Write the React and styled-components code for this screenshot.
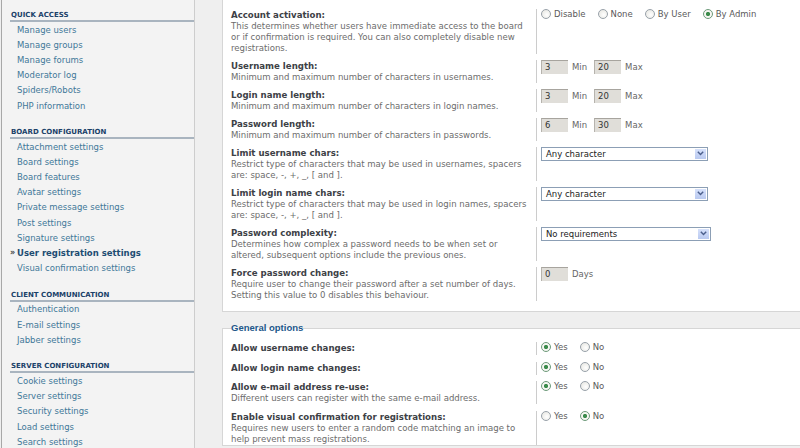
import React from 'react';
import styled, { createGlobalStyle } from 'styled-components';

const Global = createGlobalStyle`
  html, body { margin: 0; padding: 0; background: #efefef; }
  body {
    width: 800px; height: 448px; overflow: hidden;
    font-family: "DejaVu Sans", Verdana, sans-serif;
  }
`;

const Page = styled.div`
  display: grid;
  grid-template-columns: 194px 1fr;
  column-gap: 27px;
  height: 448px;
  padding-left: 1px;
  overflow: hidden;
`;

const Sidebar = styled.nav`
  background: #f3f3f3;
  border-left: 1px solid #a8a8a8;
  border-right: 1px solid #cdcdcd;
  padding: 10px 0 0 8px;
  overflow: hidden;
`;

const Section = styled.div`
  margin-bottom: 14px;
`;

const SectionTitle = styled.div`
  font-size: 7px;
  line-height: 10px;
  font-weight: bold;
  text-transform: uppercase;
  color: #1a4169;
  padding-left: 1px;
  border-bottom: 2px solid #a9b4bf;
`;

const NavList = styled.ul`
  list-style: none;
  margin: 0;
  padding: 0;
`;

const NavItem = styled.li`
  display: flex;
  align-items: center;
  height: 15.2px;
  font-size: 8.5px;
  color: ${p => (p.$active ? '#1d4c72' : '#3f7899')};
  font-weight: ${p => (p.$active ? 'bold' : 'normal')};
`;

const Marker = styled.span`
  width: 7px;
  flex: none;
  font-size: 8px;
  font-weight: bold;
  color: #444;
  line-height: 8px;
`;

const Main = styled.main`
  display: flex;
  flex-direction: column;
  min-width: 0;
`;

const Fieldset = styled.fieldset`
  margin: ${p => (p.$first ? '0' : '10px 0 0')};
  padding: ${p => (p.$first ? '9px 0 10px 8px' : '8px 0 0 8px')};
  background: #ffffff;
  border: 1px solid #d6d6d6;
  border-top: ${p => (p.$first ? 'none' : '1px solid #d6d6d6')};
  border-right: none;
  min-width: 0;
`;

const Legend = styled.legend`
  padding: 0;
  font-family: "Liberation Sans", Arial, sans-serif;
  font-size: 9.5px;
  font-weight: bold;
  line-height: 12px;
  color: #22578a;
`;

const Row = styled.dl`
  display: grid;
  grid-template-columns: 306px 1fr;
  margin: 0 0 ${p => p.$gap}px;
  &:last-child { margin-bottom: 0; }
`;

const Term = styled.dt`
  border-right: 1px solid #cccccc;
  white-space: nowrap;
`;

const Label = styled.div`
  font-size: 8.6px;
  line-height: 12px;
  font-weight: bold;
  color: #3d4146;
`;

const Explain = styled.div`
  font-size: 8.55px;
  line-height: 11px;
  color: #6c6c6c;
`;

const Detail = styled.dd`
  margin: 0;
  padding-left: 4px;
  display: flex;
  align-items: center;
  align-self: start;
  height: 13px;
  font-size: 8.5px;
  color: #5e5e5e;
`;

const Option = styled.label`
  display: inline-flex;
  align-items: center;
  gap: 3px;
  margin: -3px 12px 0 0;
  color: #5a5a5a;
`;

const Radio = styled.span`
  width: 10px;
  height: 10px;
  box-sizing: border-box;
  border-radius: 50%;
  flex: none;
  border: 1px solid ${p => (p.$checked ? '#6d9a7a' : '#98a1a9')};
  background: ${p =>
    p.$checked
      ? 'radial-gradient(circle, #3c8c4c 0 1.8px, #f6f6f2 2.4px)'
      : 'radial-gradient(circle at 60% 60%, #ffffff, #e3e3dd)'};
`;

const TextBox = styled.span`
  display: inline-block;
  box-sizing: border-box;
  width: 27px;
  height: 14px;
  line-height: 13px;
  padding-left: 3px;
  background: #e0ded9;
  border-top: 1px solid #a7a49e;
  border-left: 1px solid #b6b3ad;
  color: #333;
  margin-right: 4px;
`;

const Unit = styled.span`
  color: #666;
  margin-right: 7px;
`;

const SelectBox = styled.div`
  box-sizing: border-box;
  width: ${p => p.$w}px;
  height: 14px;
  border: 1px solid #8c9fb5;
  background: #fff;
  display: flex;
  align-items: center;
  justify-content: space-between;
  padding: 0 1px 0 4px;
  color: #222;
`;

const DropButton = styled.span`
  width: 11px;
  height: 10px;
  background: linear-gradient(#d6e1fb, #b9c9f0);
  display: flex;
  align-items: center;
  justify-content: center;
`;

const nav = [
  { title: 'Quick access', items: ['Manage users', 'Manage groups', 'Manage forums', 'Moderator log', 'Spiders/Robots', 'PHP information'] },
  {
    title: 'Board configuration',
    items: ['Attachment settings', 'Board settings', 'Board features', 'Avatar settings', 'Private message settings', 'Post settings', 'Signature settings', 'User registration settings', 'Visual confirmation settings'],
    active: 'User registration settings',
  },
  { title: 'Client communication', items: ['Authentication', 'E-mail settings', 'Jabber settings'] },
  { title: 'Server configuration', items: ['Cookie settings', 'Server settings', 'Security settings', 'Load settings', 'Search settings'] },
];

const registration = [
  {
    label: 'Account activation:',
    explain: ['This determines whether users have immediate access to the board', 'or if confirmation is required. You can also completely disable new', 'registrations.'],
    control: { type: 'radio', options: ['Disable', 'None', 'By User', 'By Admin'], checked: 3 },
  },
  { label: 'Username length:', explain: ['Minimum and maximum number of characters in usernames.'], control: { type: 'minmax', min: '3', max: '20' } },
  { label: 'Login name length:', explain: ['Minimum and maximum number of characters in login names.'], control: { type: 'minmax', min: '3', max: '20' } },
  { label: 'Password length:', explain: ['Minimum and maximum number of characters in passwords.'], control: { type: 'minmax', min: '6', max: '30' } },
  {
    label: 'Limit username chars:',
    explain: ['Restrict type of characters that may be used in usernames, spacers', 'are: space, -, +, _, [ and ].'],
    control: { type: 'select', value: 'Any character', width: 167 },
  },
  {
    label: 'Limit login name chars:',
    explain: ['Restrict type of characters that may be used in login names, spacers', 'are: space, -, +, _, [ and ].'],
    control: { type: 'select', value: 'Any character', width: 167 },
  },
  {
    label: 'Password complexity:',
    explain: ['Determines how complex a password needs to be when set or', 'altered, subsequent options include the previous ones.'],
    control: { type: 'select', value: 'No requirements', width: 170 },
  },
  {
    label: 'Force password change:',
    explain: ['Require user to change their password after a set number of days.', 'Setting this value to 0 disables this behaviour.'],
    control: { type: 'days', value: '0' },
  },
];

const general = [
  { label: 'Allow username changes:', explain: [], control: { type: 'radio', options: ['Yes', 'No'], checked: 0 } },
  { label: 'Allow login name changes:', explain: [], control: { type: 'radio', options: ['Yes', 'No'], checked: 0 } },
  { label: 'Allow e-mail address re-use:', explain: ['Different users can register with the same e-mail address.'], control: { type: 'radio', options: ['Yes', 'No'], checked: 0 } },
  {
    label: 'Enable visual confirmation for registrations:',
    explain: ['Requires new users to enter a random code matching an image to', 'help prevent mass registrations.'],
    control: { type: 'radio', options: ['Yes', 'No'], checked: 1 },
  },
];

function Chevron() {
  return (
    <svg width="7" height="5" viewBox="0 0 7 5">
      <path d="M0.8 0.8 L3.5 3.6 L6.2 0.8" fill="none" stroke="#4b5f8c" strokeWidth="1.4" />
    </svg>
  );
}

function Control({ control }) {
  switch (control.type) {
    case 'radio':
      return control.options.map((o, i) => (
        <Option key={o}>
          <Radio $checked={i === control.checked} />
          {o}
        </Option>
      ));
    case 'minmax':
      return (
        <>
          <TextBox>{control.min}</TextBox>
          <Unit>Min</Unit>
          <TextBox>{control.max}</TextBox>
          <Unit>Max</Unit>
        </>
      );
    case 'select':
      return (
        <SelectBox $w={control.width}>
          <span>{control.value}</span>
          <DropButton>
            <Chevron />
          </DropButton>
        </SelectBox>
      );
    case 'days':
      return (
        <>
          <TextBox>{control.value}</TextBox>
          <Unit>Days</Unit>
        </>
      );
    default:
      return null;
  }
}

function SettingRow({ item, gap }) {
  return (
    <Row $gap={gap}>
      <Term>
        <Label>{item.label}</Label>
        {item.explain.map(line => (
          <Explain key={line}>{line}</Explain>
        ))}
      </Term>
      <Detail>
        <Control control={item.control} />
      </Detail>
    </Row>
  );
}

export default function App() {
  return (
    <>
      <Global />
      <Page>
        <Sidebar>
          {nav.map(sec => (
            <Section key={sec.title}>
              <SectionTitle>{sec.title}</SectionTitle>
              <NavList>
                {sec.items.map(it => (
                  <NavItem key={it} $active={it === sec.active}>
                    <Marker>{it === sec.active ? '»' : ''}</Marker>
                    {it}
                  </NavItem>
                ))}
              </NavList>
            </Section>
          ))}
        </Sidebar>
        <Main>
          <Fieldset $first>
            {registration.map(item => (
              <SettingRow key={item.label} item={item} gap={6} />
            ))}
          </Fieldset>
          <Fieldset>
            <Legend>General options</Legend>
            {general.map(item => (
              <SettingRow key={item.label} item={item} gap={6.7} />
            ))}
          </Fieldset>
        </Main>
      </Page>
    </>
  );
}
